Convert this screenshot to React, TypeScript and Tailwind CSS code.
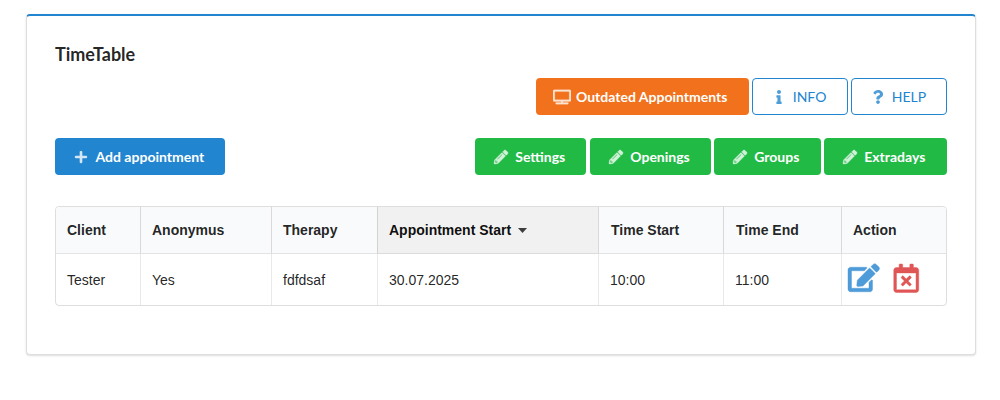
import type { ReactNode } from "react";
import { FaPlus, FaTv, FaInfo, FaQuestion, FaPencilAlt, FaEdit, FaRegCalendarTimes } from "react-icons/fa";

type ButtonProps = { icon: ReactNode; label: string; className: string };

function Button({ icon, label, className }: ButtonProps) {
  return (
    <button className={`flex h-[37px] items-center rounded-[4px] text-[14px] leading-[14px] whitespace-nowrap ${className}`}>
      <span className="mr-[6px] flex w-[16.5px] justify-center opacity-80">{icon}</span>
      <span>{label}</span>
    </button>
  );
}

const green = "bg-[#21ba45] pl-[17.75px] text-white font-bold";
const outline = "border border-[#2185d0] bg-white pl-[17.25px] text-[#2185d0]";

const pencil = <FaPencilAlt size={14} className="overflow-visible [stroke-width:14]" />;

const headers = ["Client", "Anonymus", "Therapy", "Appointment Start", "Time Start", "Time End", "Action"];
const row = ["Tester", "Yes", "fdfdsaf", "30.07.2025", "10:00", "11:00"];

export default function App() {
  return (
    <div className="h-[400px] bg-white pt-[14px] pl-[26px] font-[Lato,sans-serif] text-black/87">
      <main className="h-[341px] w-[950px] rounded-[4px] border border-t-2 border-[#22242626] border-t-[#2185d0] bg-white px-[28px] shadow-[0_1px_2px_0_rgba(34,36,38,0.15)]">
        <h1 className="pt-[26px] text-[18px] leading-[24px] font-bold">TimeTable</h1>
        <div className="mt-[12px] flex justify-end">
          <Button
            icon={<FaTv className="w-[18px] shrink-0 [stroke-width:10]" size={16} />}
            label="Outdated Appointments"
            className="mr-[3px] w-[213px] bg-[#f2711c] pl-[17.5px] font-bold text-white"
          />
          <Button icon={<FaInfo size={14} />} label="INFO" className={`mr-[3px] w-[96px] ${outline}`} />
          <Button icon={<FaQuestion size={14} />} label="HELP" className={`w-[96px] ${outline}`} />
        </div>
        <div className="mt-[23px] flex">
          <Button icon={<FaPlus size={14} />} label="Add appointment" className="mr-auto w-[170px] bg-[#2185d0] pl-[18px] font-bold text-white" />
          <Button icon={pencil} label="Settings" className={`mr-[4px] w-[111px] ${green}`} />
          <Button icon={pencil} label="Openings" className={`mr-[3px] w-[121px] ${green}`} />
          <Button icon={pencil} label="Groups" className={`mr-[3px] w-[107px] ${green}`} />
          <Button icon={pencil} label="Extradays" className={`w-[123px] ${green}`} />
        </div>
        <div className="mt-[31px] h-[100px] overflow-hidden rounded-[4px] border border-[#22242626]">
          <table className="w-full table-fixed border-separate border-spacing-0 text-left font-['Liberation_Sans',Arial,sans-serif] text-[14px] leading-[18px]">
            <colgroup>
              <col className="w-[84px]" />
              <col className="w-[131px]" />
              <col className="w-[106px]" />
              <col className="w-[221px]" />
              <col className="w-[125px]" />
              <col className="w-[118px]" />
              <col className="w-[105px]" />
            </colgroup>
            <thead>
              <tr className="h-[47px]">
                {headers.map((label, i) => (
                  <th
                    key={label}
                    className={`border-b border-[#2224261a] p-0 font-bold ${i === 4 || i === 5 ? "pl-[12px]" : "pl-[11px]"} ${i > 0 ? "border-l border-l-[#22242626]" : ""} ${i === 3 ? "bg-[#f1f1f1] text-black/95" : "bg-[#f9fafb]"}`}
                  >
                    <span className="flex items-center">
                      {label}
                      {i === 3 && (
                        <svg className="ml-[7px] fill-black/75" width="9" height="5" viewBox="0 0 9 5">
                          <path d="M0 0h9L4.5 5z" />
                        </svg>
                      )}
                    </span>
                  </th>
                ))}
              </tr>
            </thead>
            <tbody>
              <tr className="h-[51px]">
                {row.map((value, i) => (
                  <td key={i} className={`p-0 pl-[11px] ${i > 0 ? "border-l border-[#2224261a]" : ""}`}>
                    {value}
                  </td>
                ))}
                <td className="border-l border-[#2224261a] p-0 pb-[3px] pl-[6px]">
                  <span className="flex items-center">
                    <FaEdit size={31.5} className="overflow-visible text-[#4d9bd9] [stroke-width:8]" />
                    <FaRegCalendarTimes size={28.5} className="ml-[12.3px] overflow-visible text-[#e05656] [stroke-width:8]" />
                  </span>
                </td>
              </tr>
            </tbody>
          </table>
        </div>
      </main>
    </div>
  );
}
